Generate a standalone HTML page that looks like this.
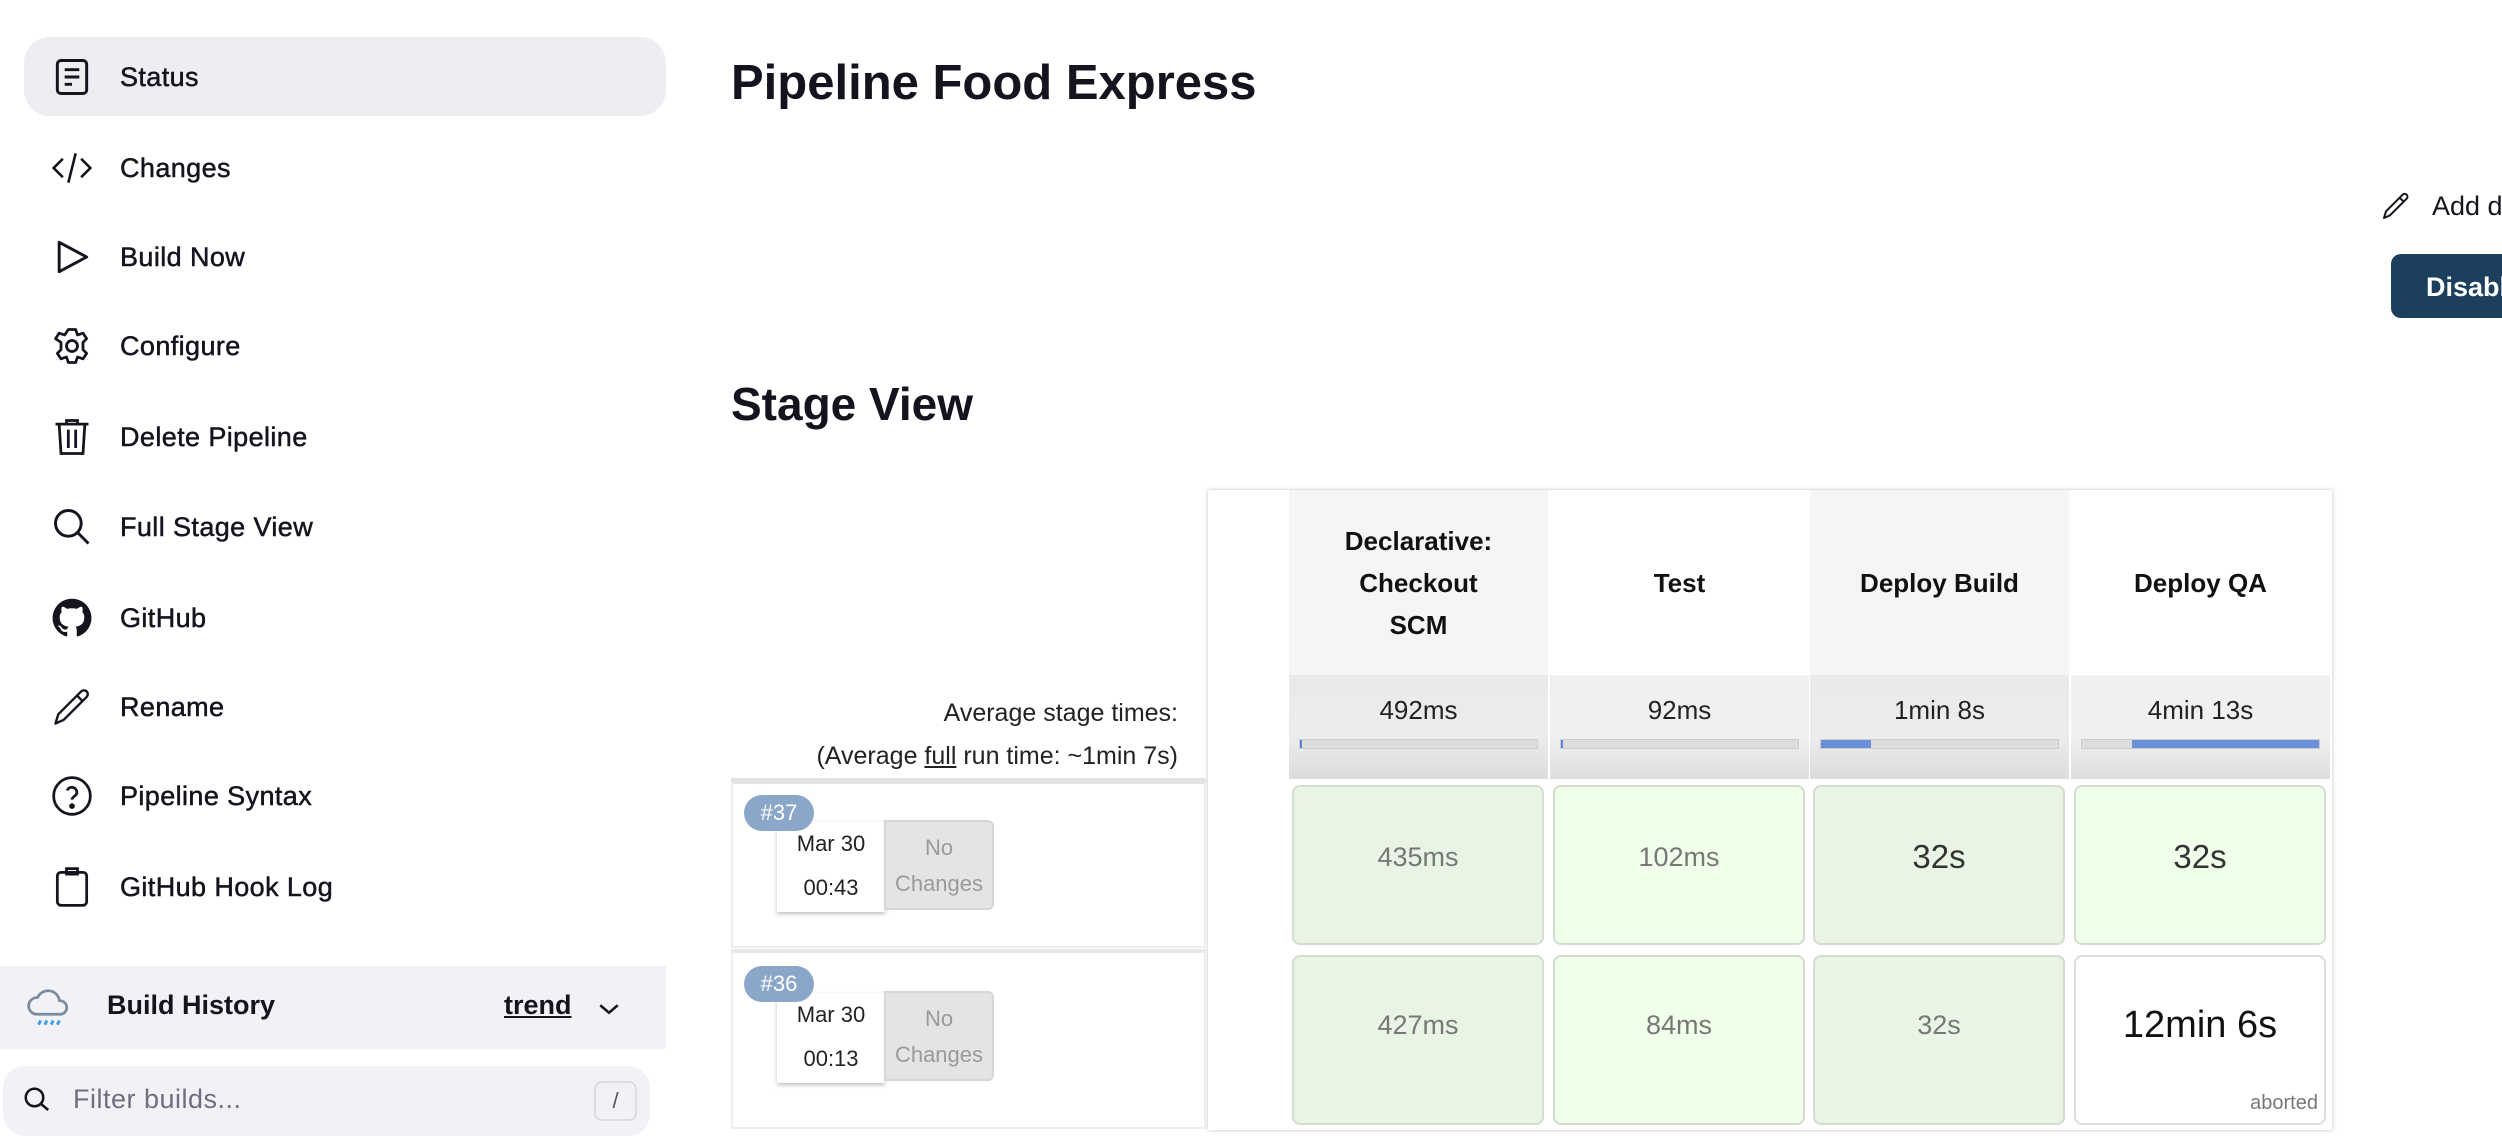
<!DOCTYPE html>
<html><head><meta charset="utf-8"><style>
*{margin:0;padding:0;box-sizing:border-box}
body{width:2502px;height:1118px;overflow:hidden;background:#fff;font-family:"Liberation Sans",sans-serif;color:#14141f;position:relative}
.a{position:absolute}
.nav{left:24px;width:642px;height:80px;display:flex;align-items:center}
.nav svg{position:absolute;left:26px;width:44px;height:44px}
.nav span{position:absolute;left:96px;font-size:27px;font-weight:400;-webkit-text-stroke:0.5px #14141f;letter-spacing:.4px}
.hd{font-weight:700;font-size:26px;text-align:center;display:flex;align-items:center;justify-content:center;line-height:42px;color:#111}
.avg{top:675px;height:104px;background:linear-gradient(#eaeaea 0,#ececec 60%,#dcdcdc 100%);font-size:26px;text-align:center;padding-top:20px;color:#222}
.bar{position:absolute;left:10px;right:10px;top:64px;height:10px;background:#ddd;border:1px solid #ccc}
.cell{position:absolute;border:2px solid #d4dccf;border-radius:8px;display:flex;align-items:center;justify-content:center;font-size:27px;color:#777;padding-bottom:16px}
.g1{background:#e9f5e4}.g2{background:#f0ffea}
.badge{background:#8aa6c9;color:#fff;font-size:22px;border-radius:18px;width:70px;height:36px;display:flex;align-items:center;justify-content:center}
.date{background:#fff;box-shadow:0 2px 4px rgba(0,0,0,.25);width:108px;height:90px;font-size:22px;text-align:center;line-height:44px;color:#222}
.nc{background:#e4e4e4;border:2px solid #d6d6d6;border-radius:0 6px 6px 0;width:110px;height:90px;font-size:22px;color:#9a9a9a;text-align:center;line-height:36px;padding-top:8px}
</style></head><body>
<div class="a" style="left:24px;top:37px;width:642px;height:79px;background:#ededf2;border-radius:26px"></div>
<div class="a nav" style="top:37px"><svg viewBox="0 0 24 24" fill="none" stroke="#14141f" stroke-width="1.6"><rect x="4" y="3" width="16" height="18" rx="2"/><path d="M8 8h8M8 12h8M8 16h4"/></svg><span>Status</span></div>
<div class="a nav" style="top:128px"><svg viewBox="0 0 24 24" fill="none" stroke="#14141f" stroke-width="1.4"><path d="M7 7l-5 5 5 5M17 7l5 5-5 5M14 4l-4 16"/></svg><span>Changes</span></div>
<div class="a nav" style="top:217px"><svg viewBox="0 0 24 24" fill="none" stroke="#14141f" stroke-width="1.6"><path d="M5 4v16l15-8z" stroke-linejoin="round"/></svg><span>Build Now</span></div>
<div class="a nav" style="top:306px"><svg viewBox="0 0 24 24" fill="none" stroke="#14141f" stroke-width="1.5"><circle cx="12" cy="12" r="3"/><path d="M10 3h4l1 3 3-1 2 3-2 2v4l2 2-2 3-3-1-1 3h-4l-1-3-3 1-2-3 2-2v-4L3 8l2-3 3 1z" stroke-linejoin="round"/></svg><span>Configure</span></div>
<div class="a nav" style="top:397px"><svg viewBox="0 0 24 24" fill="none" stroke="#14141f" stroke-width="1.5"><path d="M3 5h18M9 5V3h6v2M5 5l1 16h12l1-16M10 8v10M14 8v10"/></svg><span>Delete Pipeline</span></div>
<div class="a nav" style="top:487px"><svg viewBox="0 0 24 24" fill="none" stroke="#14141f" stroke-width="1.6"><circle cx="10" cy="10" r="7"/><path d="M15 15l6 6"/></svg><span>Full Stage View</span></div>
<div class="a nav" style="top:578px"><svg viewBox="0 0 24 24"><path fill="#14141f" d="M12 1.5a10.5 10.5 0 00-3.3 20.5c.5.1.7-.2.7-.5v-2c-2.9.6-3.5-1.3-3.5-1.3-.5-1.2-1.2-1.5-1.2-1.5-1-.6.1-.6.1-.6 1 .1 1.600 1.1 1.6 1.1.9 1.6 2.4 1.1 3 .9.1-.7.4-1.1.7-1.4-2.300-.3-4.800-1.2-4.800-5.2 0-1.1.4-2.1 1.1-2.8-.1-.3-.5-1.3.1-2.8 0 0 .9-.3 2.9 1.1a10 10 0 015.2 0c2-1.4 2.9-1.1 2.9-1.1.6 1.5.2 2.5.1 2.8.7.7 1.1 1.7 1.1 2.8 0 4-2.5 4.9-4.8 5.2.4.3.7 1 .7 1.9v2.9c0 .3.2.6.7.5A10.5 10.5 0 0012 1.5z"/></svg><span>GitHub</span></div>
<div class="a nav" style="top:667px"><svg viewBox="0 0 24 24" fill="none" stroke="#14141f" stroke-width="1.3"><path d="M3 21l1.5-5L17 3.5a2 2 0 013 3L7.5 19z M15 6l3 3" stroke-linejoin="round"/></svg><span>Rename</span></div>
<div class="a nav" style="top:756px"><svg viewBox="0 0 24 24" fill="none" stroke="#14141f" stroke-width="1.5"><circle cx="12" cy="12" r="10"/><path d="M9.3 9a2.8 2.8 0 015.4 1c0 2-2.7 2.3-2.7 4"/><circle cx="12" cy="17.5" r=".8" fill="#14141f"/></svg><span>Pipeline Syntax</span></div>
<div class="a nav" style="top:847px"><svg viewBox="0 0 24 24" fill="none" stroke="#14141f" stroke-width="1.5"><rect x="4" y="4" width="16" height="18" rx="2"/><path d="M9 2h6v3H9z"/></svg><span>GitHub Hook Log</span></div>

<div class="a" style="left:0;top:966px;width:666px;height:83px;background:#f2f2f6"></div>
<svg class="a" style="left:24px;top:983px" width="50" height="50" viewBox="0 0 24 24" fill="none"><path d="M6 15a4 4 0 01.5-8 5.5 5.5 0 0110.5 1.5A3.3 3.3 0 0118 15z" stroke="#7a8aa0" stroke-width="1.3"/><path d="M8 18l-1 2M11 18l-1 2M14 18l-1 2M17 18l-1 2" stroke="#3b9ee8" stroke-width="1.4"/></svg>
<div class="a" style="left:107px;top:990px;font-size:27px;font-weight:700">Build History</div>
<div class="a" style="left:504px;top:990px;font-size:27px;font-weight:700;text-decoration:underline">trend</div>
<svg class="a" style="left:594px;top:994px" width="30" height="30" viewBox="0 0 24 24" fill="none" stroke="#14141f" stroke-width="2"><path d="M5 9l7 6 7-6"/></svg>
<div class="a" style="left:3px;top:1066px;width:647px;height:70px;background:#f2f2f6;border-radius:22px"></div>
<svg class="a" style="left:22px;top:1085px" width="30" height="30" viewBox="0 0 24 24" fill="none" stroke="#14141f" stroke-width="2"><circle cx="10" cy="10" r="7"/><path d="M15 15l6 5"/></svg>
<div class="a" style="left:73px;top:1084px;font-size:27px;color:#6e6e80;letter-spacing:.5px">Filter builds...</div>
<div class="a" style="left:594px;top:1081px;width:43px;height:40px;border:2px solid #ddd;border-radius:8px;font-size:22px;color:#555;text-align:center;line-height:36px">/</div>

<div class="a" style="left:731px;top:55px;font-size:49px;font-weight:700">Pipeline Food Express</div>
<svg class="a" style="left:2380px;top:190px" width="32" height="32" viewBox="0 0 24 24" fill="none" stroke="#14141f" stroke-width="1.5"><path d="M3 21l1.5-5L17 3.5a2 2 0 013 3L7.5 19z M15 6l3 3" stroke-linejoin="round"/></svg>
<div class="a" style="left:2432px;top:191px;font-size:27px;white-space:nowrap">Add description</div>
<div class="a" style="left:2391px;top:254px;width:200px;height:64px;background:#1d3f5e;border-radius:10px;color:#fff;font-size:27px;font-weight:700;padding:18px 0 0 35px;white-space:nowrap;overflow:hidden">Disable Project</div>
<div class="a" style="left:731px;top:377px;font-size:46px;font-weight:700">Stage View</div>

<div class="a" style="left:1208px;top:490px;width:1124px;height:640px;background:#fff;box-shadow:0 0 4px rgba(0,0,0,.25)"></div>
<div class="a hd" style="left:1289px;top:490px;width:259px;height:185px;background:#f5f5f5">Declarative:<br>Checkout<br>SCM</div>
<div class="a hd" style="left:1550px;top:490px;width:259px;height:185px;background:#fff">Test</div>
<div class="a hd" style="left:1810px;top:490px;width:259px;height:185px;background:#f5f5f5">Deploy Build</div>
<div class="a hd" style="left:2071px;top:490px;width:259px;height:185px;background:#fff">Deploy QA</div>

<div class="a avg" style="left:1289px;width:259px">492ms<div class="bar"><div style="position:absolute;left:0;top:0;bottom:0;width:2px;background:#5b86d6"></div></div></div>
<div class="a avg" style="left:1550px;width:259px;background:linear-gradient(#f0f0f0,#f0f0f0 60%,#dedede)">92ms<div class="bar"><div style="position:absolute;left:0;top:0;bottom:0;width:2px;background:#5b86d6"></div></div></div>
<div class="a avg" style="left:1810px;width:259px">1min 8s<div class="bar"><div style="position:absolute;left:0;top:0;bottom:0;width:50px;background:#6a8fd8"></div></div></div>
<div class="a avg" style="left:2071px;width:259px;background:linear-gradient(#f0f0f0,#f0f0f0 60%,#dedede)">4min 13s<div class="bar"><div style="position:absolute;left:50px;right:0;top:0;bottom:0;background:#6a8fd8"></div></div></div>

<div class="a" style="left:731px;top:692px;width:447px;text-align:right;font-size:25px;line-height:43px;color:#222">Average stage times:<br>(Average <u>full</u> run time: ~1min 7s)</div>
<div class="a" style="left:731px;top:778px;width:475px;height:6px;background:#e4e4e4"></div>
<div class="a" style="left:731px;top:782px;width:475px;height:166px;border:2px solid #eee;border-top:none"></div>
<div class="a" style="left:731px;top:949px;width:475px;height:180px;border:2px solid #eee;border-top:4px solid #e8e8e8"></div>

<div class="a date" style="left:777px;top:822px">Mar 30<br>00:43</div>
<div class="a nc" style="left:884px;top:820px">No<br>Changes</div>
<div class="a badge" style="left:744px;top:795px">#37</div>
<div class="a date" style="left:777px;top:993px">Mar 30<br>00:13</div>
<div class="a nc" style="left:884px;top:991px">No<br>Changes</div>
<div class="a badge" style="left:744px;top:966px">#36</div>

<div class="cell g1" style="left:1292px;top:785px;width:252px;height:160px">435ms</div>
<div class="cell g2" style="left:1553px;top:785px;width:252px;height:160px">102ms</div>
<div class="cell g1" style="left:1813px;top:785px;width:252px;height:160px;color:#333;font-size:33px">32s</div>
<div class="cell g2" style="left:2074px;top:785px;width:252px;height:160px;color:#333;font-size:33px">32s</div>
<div class="cell g1" style="left:1292px;top:955px;width:252px;height:170px;padding-bottom:30px">427ms</div>
<div class="cell g2" style="left:1553px;top:955px;width:252px;height:170px;padding-bottom:30px">84ms</div>
<div class="cell g1" style="left:1813px;top:955px;width:252px;height:170px;padding-bottom:30px">32s</div>
<div class="cell" style="left:2074px;top:955px;width:252px;height:170px;background:#fff;color:#111;font-size:38px;border-color:#ddd;padding-bottom:30px">12min 6s<span style="position:absolute;right:6px;bottom:8px;font-size:20px;color:#777">aborted</span></div>
</body></html>
